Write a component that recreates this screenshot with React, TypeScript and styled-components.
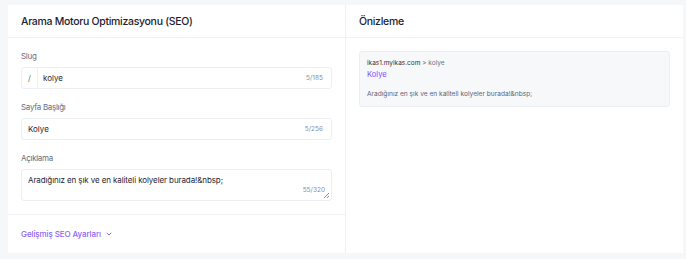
import React from "react";
import styled, { createGlobalStyle } from "styled-components";

const Global = createGlobalStyle`
  html, body { margin: 0; padding: 0; background: #f6f7f9; }
  body { font-family: Inter, "Noto Sans", sans-serif; color: #1f2430; }
  * { box-sizing: border-box; }
`;

const Page = styled.div`
  padding: 5px 3px 6px 8px;
`;

const Card = styled.div`
  background: #fff;
  display: grid;
  grid-template-columns: 338px 1fr;
  height: 248px;
`;

const Column = styled.div<{ $divider?: boolean }>`
  display: flex;
  flex-direction: column;
  border-right: ${(p) => (p.$divider ? "1px solid #f0f1f4" : "none")};
`;

const Header = styled.div`
  height: 33px;
  padding: 0 13px;
  display: flex;
  align-items: center;
  border-bottom: 1px solid #f0f1f4;
  font-size: 10.5px;
  letter-spacing: -0.3px;
  font-weight: 500;
  color: #1c2130;
`;

const Body = styled.div`
  padding: 12px 13px 0 13px;
  display: flex;
  flex-direction: column;
  gap: 12px;
`;

const Field = styled.div`
  display: flex;
  flex-direction: column;
  gap: 4px;
`;

const Label = styled.div`
  font-size: 8px;
  letter-spacing: -0.3px;
  color: #686e7c;
  height: 13px;
  line-height: 13px;
`;

const InputBox = styled.div`
  display: flex;
  align-items: center;
  height: 22px;
  border: 1px solid #eceef2;
  border-radius: 3px;
  font-size: 8px;
  color: #1f2430;
`;

const Prefix = styled.div`
  width: 16px;
  height: 100%;
  display: flex;
  align-items: center;
  justify-content: center;
  border-right: 1px solid #eceef2;
  color: #6b7180;
  font-size: 8px;
`;

const Value = styled.div<{ $pad: number }>`
  flex: 1;
  padding-left: ${(p) => p.$pad}px;
`;

const Count = styled.div`
  font-size: 6.5px;
  color: #8a909c;
  padding-right: 8px;
`;

const TextArea = styled.div`
  position: relative;
  height: 32px;
  border: 1px solid #eceef2;
  border-radius: 3px;
  font-size: 8px;
  letter-spacing: -0.1px;
  line-height: 10px;
  padding: 5px 6px;
  color: #1f2430;
`;

const AreaCount = styled.div`
  position: absolute;
  right: 6px;
  bottom: 5px;
  font-size: 6.5px;
  letter-spacing: 0;
  color: #8a909c;
`;

const Grip = styled.svg`
  position: absolute;
  right: 1px;
  bottom: 1px;
`;

const Footer = styled.div`
  margin-top: auto;
  border-top: 1px solid #f0f1f4;
  height: 39px;
  display: flex;
  align-items: center;
  padding: 0 13px 1px 13px;
  gap: 4px;
  color: #8b63f6;
  font-size: 8px;
  letter-spacing: -0.1px;
  font-weight: 500;
`;

const Preview = styled.div`
  margin: 13px 13px 0 13px;
  height: 56px;
  background: #f7f8fa;
  border: 1px solid #eceef2;
  border-radius: 3px;
  padding: 6px 7px 0 7px;
  display: flex;
  flex-direction: column;
`;

const Crumb = styled.div`
  font-size: 6.5px;
  color: #30343d;
  line-height: 10px;
  span { color: #6b7180; }
`;

const PreviewTitle = styled.div`
  font-size: 7.6px;
  color: #7c4dff;
  line-height: 14px;
  margin-bottom: 7px;
`;

const PreviewDesc = styled.div`
  font-size: 6.6px;
  color: #5d6270;
  line-height: 10px;
`;

export default function App() {
  return (
    <>
      <Global />
      <Page>
        <Card>
          <Column $divider>
            <Header>Arama Motoru Optimizasyonu (SEO)</Header>
            <Body>
              <Field>
                <Label>Slug</Label>
                <InputBox>
                  <Prefix>/</Prefix>
                  <Value $pad={5}>kolye</Value>
                  <Count>5/185</Count>
                </InputBox>
              </Field>
              <Field>
                <Label>Sayfa Başlığı</Label>
                <InputBox>
                  <Value $pad={6}>Kolye</Value>
                  <Count>5/256</Count>
                </InputBox>
              </Field>
              <Field>
                <Label>Açıklama</Label>
                <TextArea>
                  Aradığınız en şık ve en kaliteli kolyeler burada!&amp;nbsp;
                  <AreaCount>55/320</AreaCount>
                  <Grip width="7" height="7" viewBox="0 0 7 7">
                    <path d="M6 1 L1 6 M6 4 L4 6" stroke="#6b7180" strokeWidth="0.8" />
                  </Grip>
                </TextArea>
              </Field>
            </Body>
            <Footer>
              Gelişmiş SEO Ayarları
              <svg width="8" height="8" viewBox="0 0 10 10" fill="none">
                <path d="M2.5 3.8 L5 6.3 L7.5 3.8" stroke="#8b63f6" strokeWidth="1.2" strokeLinecap="round" strokeLinejoin="round" />
              </svg>
            </Footer>
          </Column>
          <Column>
            <Header>Önizleme</Header>
            <Preview>
              <Crumb>
                ikas1.myikas.com <span>&gt; kolye</span>
              </Crumb>
              <PreviewTitle>Kolye</PreviewTitle>
              <PreviewDesc>Aradığınız en şık ve en kaliteli kolyeler burada!&amp;nbsp;</PreviewDesc>
            </Preview>
          </Column>
        </Card>
      </Page>
    </>
  );
}
